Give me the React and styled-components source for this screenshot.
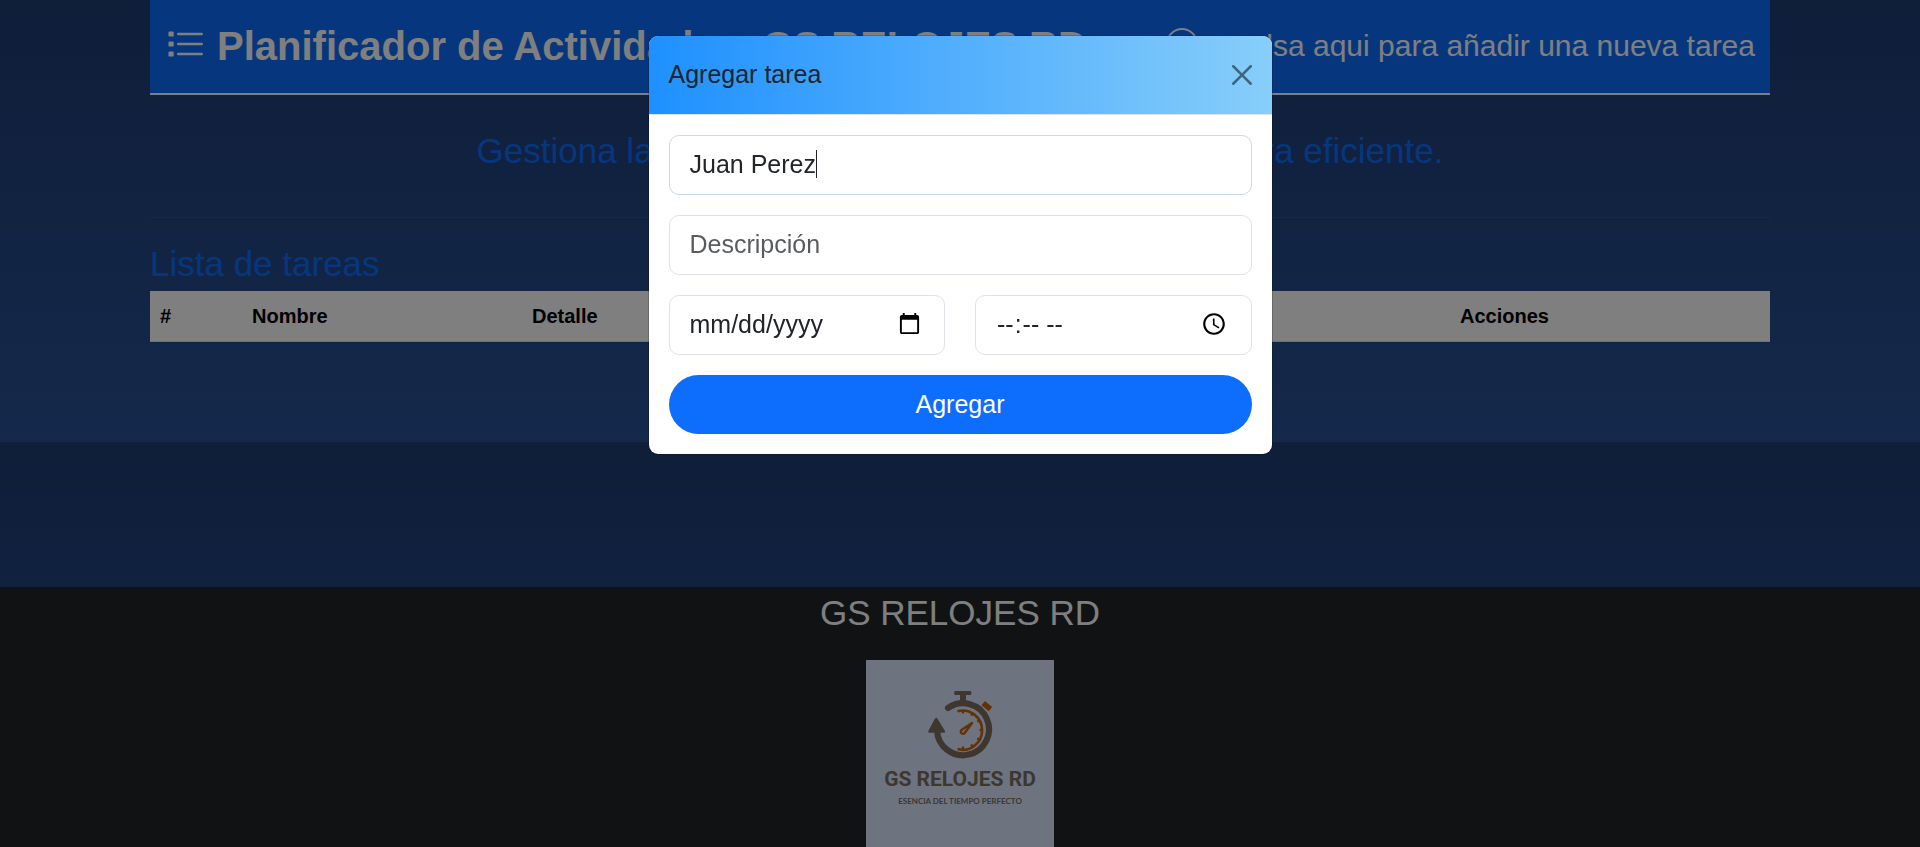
import React from "react";
import styled, { createGlobalStyle } from "styled-components";
import { BsPlusCircle } from "react-icons/bs";

const GlobalStyle = createGlobalStyle`
  * { box-sizing: border-box; }
  body {
    margin: 0;
    font-family: "Liberation Sans", Arial, sans-serif;
    font-size: 20px;
    line-height: 30px;
    color: #212529;
    background: #1e3c72;
  }
  h1, h2, h3, p { margin: 0; font-weight: 400; }
  button, input { font: inherit; color: inherit; }
`;

const Page = styled.div`
  display: flex;
  flex-direction: column;
  height: 100vh;
  overflow: hidden;
  background: linear-gradient(to bottom, #1e3c72, #2a5298) 0 0 / 100% 442px repeat-y;
`;

const Container = styled.main`
  width: 100%;
  max-width: 1650px;
  margin: 0 auto;
  padding: 0 15px;
  flex: 1;
`;

const TopBar = styled.header`
  display: flex;
  align-items: center;
  justify-content: space-between;
  height: 95px;
  padding: 0 15px 2px;
  color: #fff;
  background: #0d6efd;
  border-bottom: 2px solid #fff;

  svg {
    flex: none;
    margin-bottom: 4px;
  }
`;

const Title = styled.h1`
  display: flex;
  align-items: center;
  gap: 12px;
  font-size: 40px;
  line-height: 48px;
  font-weight: 700;
  white-space: nowrap;
`;

const AddLink = styled.button`
  display: flex;
  align-items: center;
  gap: 32px;
  padding: 0;
  border: 0;
  background: none;
  font-size: 30px;
  line-height: 45px;
  white-space: nowrap;
`;

const Lead = styled.p`
  padding: 35px 0 45px;
  font-size: 35px;
  line-height: 42px;
  text-align: center;
  color: #0d6efd;
`;

const Rule = styled.hr`
  height: 1px;
  margin: 0 0 25px;
  border: 0;
  background: #0d6efd;
  opacity: 0.4;
`;

const SectionTitle = styled.h2`
  margin-bottom: 6px;
  font-size: 35px;
  line-height: 42px;
  color: #0d6efd;
`;

const TaskTable = styled.table`
  width: 100%;
  table-layout: fixed;
  border-collapse: collapse;
  background: #fff;
  color: #000;
  border-bottom: 1px solid #dee2e6;
`;

const HeadCell = styled.th`
  width: ${(p) => p.$width};
  padding: 10px;
  text-align: left;
  font-weight: 700;
`;

const Footer = styled.footer`
  display: flex;
  flex-direction: column;
  align-items: center;
  gap: 26px;
  flex: none;
  height: 260px;
  padding-top: 5px;
  overflow: hidden;
  color: #fff;
  background: #212529;
`;

const Brand = styled.h2`
  font-size: 35px;
  line-height: 42px;
`;

const Logo = styled.svg`
  flex: none;
  width: 188px;
  height: 188px;
`;

const Backdrop = styled.div`
  position: fixed;
  inset: 0;
  background: rgba(0, 0, 0, 0.5);
`;

const Dialog = styled.section`
  width: 625px;
  max-width: 100%;
  margin: 35px auto;
  overflow: hidden;
  background: #fff;
  background-clip: padding-box;
  border: 1px solid rgba(0, 0, 0, 0.18);
  border-radius: 10px;
`;

const DialogHeader = styled.div`
  display: flex;
  align-items: center;
  justify-content: space-between;
  height: 79px;
  padding: 0 20px;
  background: linear-gradient(to right, #1e90ff, #87cefa);
  border-bottom: 1px solid #dee2e6;
`;

const DialogTitle = styled.h2`
  padding-bottom: 2px;
  font-size: 25px;
  line-height: 38px;
`;

const CloseButton = styled.button`
  display: flex;
  padding: 0;
  border: 0;
  background: none;
  color: #000;
  opacity: 0.5;
`;

const TaskForm = styled.form`
  display: grid;
  gap: 20px;
  padding: 20px;
`;

const Row = styled.div`
  display: grid;
  grid-template-columns: 1fr 1fr;
  gap: 30px;
`;

const Field = styled.input`
  display: block;
  width: 100%;
  min-width: 0;
  height: 60px;
  padding: 9px 20px 11px;
  font-size: 25px;
  line-height: 38px;
  color: #212529;
  background: #fff;
  border: 1px solid #dee2e6;
  border-radius: 10px;
  outline: 0;
  caret-color: transparent;
  &:focus { border-color: #c8d8f0; }
  &::placeholder { color: #595c5f; opacity: 1; }
  &::-webkit-datetime-edit-month-field,
  &::-webkit-datetime-edit-day-field,
  &::-webkit-datetime-edit-year-field { padding: 0; }
`;

const NameBox = styled.div`
  position: relative;
`;

const Caret = styled.span`
  position: absolute;
  left: 147px;
  top: 15px;
  width: 1px;
  height: 28px;
  background: #212529;
`;

const Submit = styled.button`
  height: 59px;
  padding: 0 0 2px;
  border: 0;
  border-radius: 30px;
  font-size: 25px;
  color: #fff;
  background: #0d6efd;
`;

const columns = [
  ["#", "92px"],
  ["Nombre", "280px"],
  ["Detalle", "312px"],
  ["Fecha", "312px"],
  ["Hora", "304px"],
  ["Acciones", "auto"],
];

function ListIcon() {
  return (
    <svg width="40" height="40" viewBox="0 0 40 40" fill="currentColor" aria-hidden="true">
      {[10, 20, 30].map((y) => (
        <g key={y}>
          <rect x="3.500" y={y - 2.6} width="5.200" height="5.200" rx="1.200" />
          <rect x="12" y={y - 1.25} width="26" height="2.500" rx="1.250" />
        </g>
      ))}
    </svg>
  );
}

function ticks() {
  return [-90, -60, -30, 0, 30, 60, 90].map((deg) => (
    <path key={deg} d="M113.500 70h3.500" transform={`rotate(${deg} 97 70)`} />
  ));
}

function BrandLogo() {
  return (
    <Logo viewBox="0 0 188 188" role="img" aria-label="GS Relojes RD">
      <rect width="188" height="188" fill="#dae8ff" />
      <path d="M82 48A26 26 0 1 1 71 70" fill="none" stroke="#7b6f61" strokeWidth="6.200" strokeLinecap="round" />
      <path d="M89.500 31h14.500a1.300 1.300 0 0 1 1.300 1.300v1.500a1.300 1.300 0 0 1-1.300 1.300h-4v7h-6v-7h-4.500a1.300 1.300 0 0 1-1.300-1.300v-1.500a1.300 1.300 0 0 1 1.300-1.300zM69 58.500q1.200-1.600 2.400 0L79 71q.6 1.800-1 1.800H63.500q-1.900 0-1.200-1.800z" fill="#7b6f61" />
      <g fill="none" stroke="#c4640a">
        <path d="M91.500 51.200A19.600 19.600 0 1 1 91.500 89.100" strokeWidth="2.600" />
        <g strokeWidth="2.400">{ticks()}</g>
        <path d="M117.200 43.200l7.300 6" strokeWidth="5.400" />
        <path d="M106 63l-10.500 7a2.200 2.200 0 1 0 3.200 3z" strokeWidth="2.400" strokeLinejoin="round" />
      </g>
      <text x="94" y="126" textAnchor="middle" fontFamily="Roboto, sans-serif" fontSize="21" fontWeight="700" fill="#7b6f61">GS RELOJES RD</text>
      <text x="94" y="144" textAnchor="middle" fontFamily="Lato, sans-serif" fontSize="8" fontWeight="700" fill="#7b6f61">ESENCIA DEL TIEMPO PERFECTO</text>
    </Logo>
  );
}

export default function App() {
  return (
    <>
      <GlobalStyle />
      <Page>
        <Container>
          <TopBar>
            <Title><ListIcon />Planificador de Actividades: GS RELOJES RD</Title>
            <AddLink type="button">
              <BsPlusCircle size={32} aria-hidden="true" />
              Pulsa aqui para añadir una nueva tarea
            </AddLink>
          </TopBar>
          <Lead>Gestiona las tareas de GS RELOJES RD de manera eficiente.</Lead>
          <Rule />
          <SectionTitle>Lista de tareas</SectionTitle>
          <TaskTable>
            <thead>
              <tr>
                {columns.map(([name, width]) => (
                  <HeadCell key={name} scope="col" $width={width}>{name}</HeadCell>
                ))}
              </tr>
            </thead>
          </TaskTable>
        </Container>
        <Footer>
          <Brand>GS RELOJES RD</Brand>
          <BrandLogo />
        </Footer>
      </Page>
      <Backdrop>
        <Dialog role="dialog" aria-modal="true" aria-labelledby="dialog-title">
          <DialogHeader>
            <DialogTitle id="dialog-title">Agregar tarea</DialogTitle>
            <CloseButton type="button" aria-label="Cerrar">
              <svg width="20" height="20" viewBox="0 0 16 16" fill="currentColor" aria-hidden="true">
                <path d="M.293.293a1 1 0 0 1 1.414 0L8 6.586 14.293.293a1 1 0 1 1 1.414 1.414L9.414 8l6.293 6.293a1 1 0 0 1-1.414 1.414L8 9.414l-6.293 6.293a1 1 0 0 1-1.414-1.414L6.586 8 .293 1.707a1 1 0 0 1 0-1.414z" />
              </svg>
            </CloseButton>
          </DialogHeader>
          <TaskForm>
            <NameBox>
              <Field type="text" aria-label="Nombre" defaultValue="Juan Perez" autoFocus />
              <Caret aria-hidden="true" />
            </NameBox>
            <Field type="text" aria-label="Descripción" placeholder="Descripción" />
            <Row>
              <Field type="date" aria-label="Fecha" />
              <Field type="time" aria-label="Hora" />
            </Row>
            <Submit type="submit">Agregar</Submit>
          </TaskForm>
        </Dialog>
      </Backdrop>
    </>
  );
}
